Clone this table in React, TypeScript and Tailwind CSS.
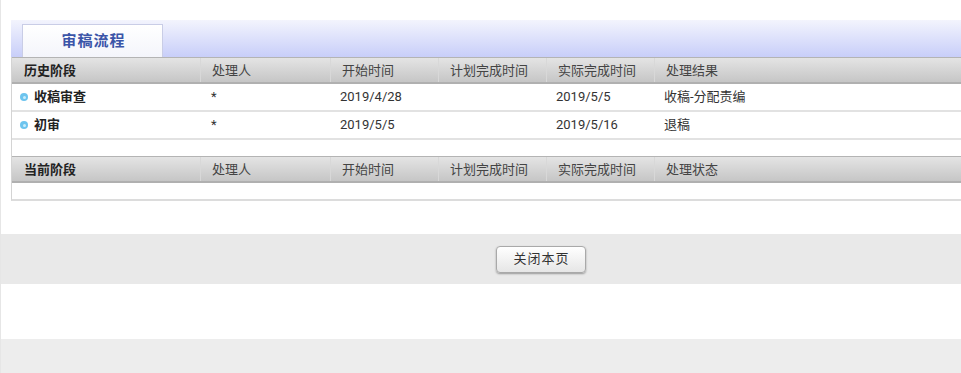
const cols = "grid grid-cols-[188px_130px_108px_108px_108px_1fr]";

const historyRows = [
  { stage: "收稿审查", user: "*", start: "2019/4/28", plan: "", done: "2019/5/5", result: "收稿-分配责编" },
  { stage: "初审", user: "*", start: "2019/5/5", plan: "", done: "2019/5/16", result: "退稿" },
];

const HeaderRow = ({ first, last }: { first: string; last: string }) => {
  const labels = [first, "处理人", "开始时间", "计划完成时间", "实际完成时间", last];
  return (
    <div className={`${cols} h-[27px] border-t border-t-[#b4b4b4] border-b-2 border-b-[#b0b0b0] bg-gradient-to-b from-[#e4e4e4] to-[#c6c6c6]`}>
      {labels.map((label, i) => (
        <div
          key={label}
          className={`flex items-center pt-[1px] ${i === 0 ? "pl-[12px] font-bold text-[#222]" : "pl-[11px] text-[#444]"} ${i > 0 ? "border-l border-l-[#d8d8d8]" : ""}`}
        >
          {label}
        </div>
      ))}
    </div>
  );
};

const Bullet = () => (
  <span className="inline-flex h-[8px] w-[8px] items-center justify-center rounded-full bg-[#6cc4ee]">
    <span className="h-[3px] w-[3px] rounded-full bg-[#c9ecfb]" />
  </span>
);

export default function App() {
  return (
    <div
      className="min-h-[373px] w-[961px] overflow-hidden border-l border-l-[#e6e6e6] bg-white text-[13px] text-[#333]"
      style={{ fontFamily: 'Roboto, "Noto Sans CJK SC", sans-serif' }}
    >
      <div className="pt-[20px] pl-[10px]">
        {/* tab bar */}
        <div className="flex h-[37px] items-end bg-gradient-to-b from-[#f3f4fd] to-[#c8cef9] pl-[11px]">
          <div className="flex h-[33px] w-[141px] items-center justify-center border border-b-0 border-[#c9cde6] bg-gradient-to-b from-white to-[#f4f5fb] pl-[2px] text-[15px] font-bold tracking-[1px] text-[#3b55a8]">
            审稿流程
          </div>
        </div>

        <div className="border-l border-b-2 border-l-[#d4d4d4] border-b-[#dcdcdc]">
          <HeaderRow first="历史阶段" last="处理结果" />
          {historyRows.map((row) => (
            <div key={row.stage} className={`${cols} h-[28px] border-b-2 border-b-[#e2e2e2]`}>
              <div className="flex items-center gap-[6px] pl-[8px] font-bold text-[#222]">
                <Bullet />
                {row.stage}
              </div>
              <div className="flex items-center pl-[11px]">{row.user}</div>
              <div className="flex items-center pl-[10px]">{row.start}</div>
              <div className="flex items-center pl-[10px]">{row.plan}</div>
              <div className="flex items-center pl-[10px]">{row.done}</div>
              <div className="flex items-center pl-[10px]">{row.result}</div>
            </div>
          ))}
          <div className="h-[16px]" />
          <HeaderRow first="当前阶段" last="处理状态" />
          <div className="h-[16px]" />
        </div>
      </div>

      <div className="mt-[33px] flex h-[50px] items-center bg-[#e9e9e9] pl-[495px]">
        <button className="h-[27px] w-[90px] rounded-[4px] border border-[#a9a9a9] bg-gradient-to-b from-white to-[#e6e6e6] pl-[1px] text-[13px] tracking-[1px] text-[#333] shadow-[0_1px_2px_rgba(0,0,0,0.35)]">
          关闭本页
        </button>
      </div>
      <div className="h-[55px]" />
      <div className="h-[35px] bg-[#ededed]" />
    </div>
  );
}
